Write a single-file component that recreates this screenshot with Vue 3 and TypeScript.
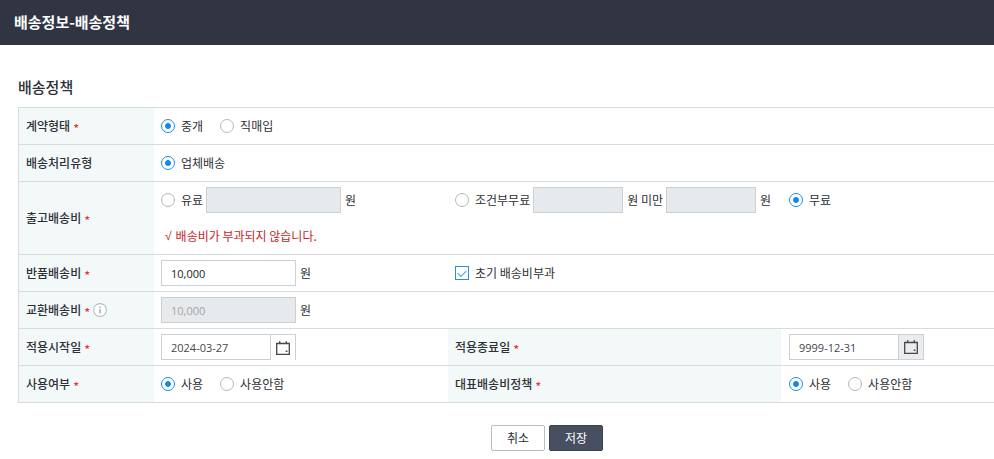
<script setup lang="ts">
import { ref } from 'vue'

const contract = ref<string>('broker')
const handling = ref<string>('vendor')
const shipping = ref<string>('free')
const paidFee = ref<string>('')
const conditionalFee = ref<string>('')
const conditionalLimit = ref<string>('')
const returnFee = ref<string>('10,000')
const exchangeFee = ref<string>('10,000')
const initialFee = ref<boolean>(true)
const startDate = ref<string>('2024-03-27')
const endDate = ref<string>('9999-12-31')
const active = ref<string>('yes')
const primary = ref<string>('yes')
</script>

<template>
  <header class="topbar">
    <h1>배송정보-배송정책</h1>
  </header>
  <main class="content">
    <h2>배송정책</h2>
    <form @submit.prevent>
      <div class="policy">
        <div class="row">
          <div class="head">계약형태 <span class="req">*</span></div>
          <div class="cell wide options">
            <label class="choice"><input v-model="contract" type="radio" name="contract" value="broker" />중개</label>
            <label class="choice"><input v-model="contract" type="radio" name="contract" value="direct" />직매입</label>
          </div>
        </div>
        <div class="row">
          <div class="head">배송처리유형</div>
          <div class="cell wide">
            <label class="choice"><input v-model="handling" type="radio" name="handling" value="vendor" />업체배송</label>
          </div>
        </div>
        <div class="row">
          <div class="head">출고배송비 <span class="req">*</span></div>
          <div class="cell stack">
            <div class="fee">
              <label class="choice"><input v-model="shipping" type="radio" name="shipping" value="paid" />유료</label>
              <input v-model="paidFee" class="field" type="text" aria-label="유료 배송비" disabled />
              <span class="unit">원</span>
            </div>
            <p class="notice"><span class="tick">√</span>배송비가 부과되지 않습니다.</p>
          </div>
          <div class="cell stack">
            <div class="fee">
              <label class="choice"><input v-model="shipping" type="radio" name="shipping" value="conditional" />조건부무료</label>
              <input v-model="conditionalFee" class="field short" type="text" aria-label="조건부 배송비 기준" disabled />
              <span class="unit">원 미만</span>
              <input v-model="conditionalLimit" class="field short" type="text" aria-label="조건부 배송비" disabled />
              <span class="unit">원</span>
            </div>
          </div>
          <div class="cell stack">
            <div class="fee">
              <label class="choice"><input v-model="shipping" type="radio" name="shipping" value="free" />무료</label>
            </div>
          </div>
        </div>
        <div class="row">
          <label class="head" for="return-fee">반품배송비 <span class="req">*</span></label>
          <div class="cell">
            <input id="return-fee" v-model="returnFee" class="field" type="text" />
            <span class="unit">원</span>
          </div>
          <div class="cell wide">
            <label class="choice"><input v-model="initialFee" type="checkbox" />초기 배송비부과</label>
          </div>
        </div>
        <div class="row">
          <div class="head">
            <label for="exchange-fee">교환배송비 <span class="req">*</span></label>
            <button class="info" type="button" aria-label="교환배송비 안내">
              <svg viewBox="0 0 14 14" width="14" height="14">
                <circle cx="7" cy="7" r="6.4" fill="#fff" stroke="#b9bdc0" stroke-width="1.1" />
                <path d="M6.2 3.4h1.6v1.5H6.2zM6.2 6h1.6v4.6H6.2z" fill="#b0b4b8" />
              </svg>
            </button>
          </div>
          <div class="cell">
            <input id="exchange-fee" v-model="exchangeFee" class="field" type="text" disabled />
            <span class="unit">원</span>
          </div>
        </div>
        <div class="row">
          <label class="head" for="start-date">적용시작일 <span class="req">*</span></label>
          <div class="cell">
            <input id="start-date" v-model="startDate" class="field date" type="text" />
            <button class="calendar" type="button" aria-label="적용시작일 선택">
              <svg viewBox="0 0 14 14" width="14" height="14">
                <path d="M.7 2.5h12.6v10.8H.7z" fill="none" stroke="#44474b" stroke-width="1.3" />
                <path d="M3 .2h1.4v2H3zM9.6.2H11v2H9.6zM9.7 9.4h1.7v1.7H9.7z" fill="#44474b" />
              </svg>
            </button>
          </div>
          <label class="head" for="end-date">적용종료일 <span class="req">*</span></label>
          <div class="cell">
            <input id="end-date" v-model="endDate" class="field date" type="text" />
            <button class="calendar" type="button" aria-label="적용종료일 선택" disabled>
              <svg viewBox="0 0 14 14" width="14" height="14">
                <path d="M.7 2.5h12.6v10.8H.7z" fill="none" stroke="#44474b" stroke-width="1.3" />
                <path d="M3 .2h1.4v2H3zM9.6.2H11v2H9.6zM9.7 9.4h1.7v1.7H9.7z" fill="#44474b" />
              </svg>
            </button>
          </div>
        </div>
        <div class="row">
          <div class="head">사용여부 <span class="req">*</span></div>
          <div class="cell options">
            <label class="choice"><input v-model="active" type="radio" name="active" value="yes" />사용</label>
            <label class="choice"><input v-model="active" type="radio" name="active" value="no" />사용안함</label>
          </div>
          <div class="head">대표배송비정책 <span class="req">*</span></div>
          <div class="cell options">
            <label class="choice"><input v-model="primary" type="radio" name="primary" value="yes" />사용</label>
            <label class="choice"><input v-model="primary" type="radio" name="primary" value="no" />사용안함</label>
          </div>
        </div>
      </div>
      <div class="actions">
        <button class="btn" type="button">취소</button>
        <button class="btn save" type="submit">저장</button>
      </div>
    </form>
  </main>
</template>

<style>
body {
  margin: 0;
  background: #fff;
  color: #2d3036;
  font: 12px/16px "Noto Sans CJK KR", sans-serif;
}
</style>

<style scoped>
* {
  box-sizing: border-box;
}
.topbar {
  display: flex;
  align-items: center;
  height: 44px;
  padding: 0 14px;
  border-bottom: 1px solid #313543;
  background: #313543;
  color: #fff;
  box-sizing: content-box;
}
h1 {
  margin: 0;
  font-size: 15px;
  line-height: 20px;
  font-weight: 700;
}
.content {
  padding: 32px 0 8px 18px;
}
h2 {
  margin: 0 0 10px;
  font-size: 15px;
  line-height: 20px;
  font-weight: 500;
}
.policy {
  border: solid #d8dcdf;
  border-width: 1px 0 0 1px;
}
.row {
  display: grid;
  grid-template-columns: 135px 294fr 333fr 213fr;
  min-height: 37px;
  border-bottom: 1px solid #d8dcdf;
}
.head,
.cell {
  display: flex;
  align-items: center;
  min-width: 0;
  padding: 0 7px;
}
.cell:nth-child(4) {
  padding-left: 8px;
}
.head,
.head > label {
  display: flex;
  gap: 3px;
}
.head {
  background: #f3f8f9;
  font-weight: 500;
}
.req {
  padding-top: 4px;
  color: #ee2b2b;
  font-size: 13px;
  line-height: 13px;
  font-weight: 400;
}
.wide {
  grid-column-end: span 2;
}
.options {
  gap: 17px;
}
.choice {
  display: flex;
  align-items: center;
  gap: 6px;
  white-space: nowrap;
}
.stack {
  flex-direction: column;
  align-items: flex-start;
  gap: 15px;
  padding: 5px 7px 10px;
}
.fee {
  display: flex;
  align-items: center;
  gap: 3px;
  height: 26px;
}
.unit {
  padding-left: 1px;
  white-space: nowrap;
}
.cell > .unit {
  padding-left: 4px;
}
.notice {
  display: flex;
  gap: 4px;
  margin: 0;
  padding-left: 4px;
  color: #c81e28;
  white-space: nowrap;
}
.tick {
  font-family: "Liberation Sans", sans-serif;
}
input[type="radio"],
input[type="checkbox"] {
  flex: none;
  appearance: none;
  width: 14px;
  height: 14px;
  margin: 0;
  border: 1px solid #b4b8bb;
  background: #fff;
}
input[type="radio"] {
  border-radius: 50%;
}
input[type="radio"]:checked {
  border-color: #1c8fea;
  background: radial-gradient(circle, #1488ee 2.5px, #fff 3.3px);
}
input[type="checkbox"]:checked {
  display: grid;
  place-items: center;
  border-color: #2490d8;
}
input[type="checkbox"]:checked::after {
  content: "";
  width: 7px;
  height: 4px;
  margin-bottom: 2px;
  border: solid #3a9be0;
  border-width: 0 0 1px 1px;
  transform: rotate(-45deg);
}
.field {
  width: 135px;
  height: 26px;
  padding: 0 9px;
  border: 1px solid #ccd0d3;
  background: #fff;
  color: #222;
  font: 11px/16px "Open Sans", "Noto Sans CJK KR", sans-serif;
}
.field:disabled {
  background: #e6eaec;
  color: #a2a6aa;
}
.short {
  width: 90px;
}
.date {
  width: 110px;
  color: #44474b;
}
.calendar {
  display: grid;
  place-items: center;
  width: 25px;
  height: 26px;
  padding: 0;
  border: solid #ccd0d3;
  border-width: 1px 1px 0 0;
  background: #fff;
}
.calendar:disabled {
  border-bottom-width: 1px;
  background: #ebeced;
}
.info {
  display: flex;
  padding: 0;
  border: 0;
  background: none;
}
.actions {
  display: flex;
  justify-content: center;
  gap: 4px;
  padding: 22px 0 0 82px;
}
.btn {
  width: 54px;
  height: 26px;
  padding: 0;
  border: 1px solid #b9bcc0;
  border-radius: 2px;
  background: #fff;
  color: #2d3036;
  font: inherit;
}
.save {
  border-color: #3a4152;
  background: #474f61;
  color: #fff;
}
</style>
